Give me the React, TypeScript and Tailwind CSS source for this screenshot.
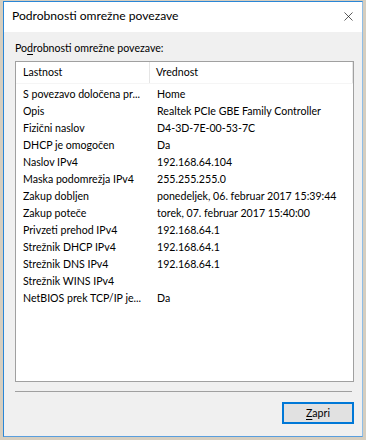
import { X } from "lucide-react"

const rows: Array<[string, string]> = [
  ["S povezavo določena pr...", "Home"],
  ["Opis", "Realtek PCIe GBE Family Controller"],
  ["Fizični naslov", "D4-3D-7E-00-53-7C"],
  ["DHCP je omogočen", "Da"],
  ["Naslov IPv4", "192.168.64.104"],
  ["Maska podomrežja IPv4", "255.255.255.0"],
  ["Zakup dobljen", "ponedeljek, 06. februar 2017 15:39:44"],
  ["Zakup poteče", "torek, 07. februar 2017 15:40:00"],
  ["Privzeti prehod IPv4", "192.168.64.1"],
  ["Strežnik DHCP IPv4", "192.168.64.1"],
  ["Strežnik DNS IPv4", "192.168.64.1"],
  ["Strežnik WINS IPv4", ""],
  ["NetBIOS prek TCP/IP je...", "Da"],
]

export default function App() {
  return (
    <div className="w-[366px] h-[440px] bg-[#d6cebf] pl-[3px] pr-[3px] pt-[1px] pb-[3px] font-['Lato',sans-serif] text-[10.6px] text-black">
      <div className="flex flex-col h-full border border-[#2a86d6] border-r-[#8fbde6] border-b-[#5a9edd]">
        {/* naslovna vrstica */}
        <div className="h-[30px] bg-white flex items-center justify-between pl-[8px] pr-[6px] pb-[1px]">
          <span className="text-[12.1px] leading-none">Podrobnosti omrežne povezave</span>
          <X className="h-[15px] w-[15px] text-[#111]" strokeWidth={1.1} />
        </div>

        <div className="flex-1 bg-[#f0f0f0] px-[11px] pt-[9px] flex flex-col">
          <div className="leading-[15px] mb-[5px]">
            Po<span className="underline underline-offset-2">d</span>robnosti omrežne povezave:
          </div>

          {/* seznam */}
          <div className="h-[321px] w-[339px] bg-white border border-[#a0a0a0] flex flex-col">
            <div className="h-[22px] flex items-center border-b border-[#f5f5f5]">
              <div className="w-[134px] shrink-0 pl-[7px] border-r border-[#e5e5e5] h-full flex items-center">
                Lastnost
              </div>
              <div className="flex-1 pl-[6px] border-r border-[#e5e5e5] h-full flex items-center">
                Vrednost
              </div>
            </div>
            <div className="pt-[2px]">
              {rows.map(([k, v], i) => (
                <div key={i} className="h-[17px] flex items-center">
                  <div className="w-[134px] shrink-0 pl-[7px] whitespace-nowrap overflow-hidden">{k}</div>
                  <div className="flex-1 min-w-0 pl-[7px] whitespace-nowrap overflow-hidden">{v}</div>
                </div>
              ))}
            </div>
          </div>

          <div className="mt-[9px] w-[337px] h-px bg-[#a0a0a0]" />

          <div className="mt-[10px] flex justify-end w-[339px]">
            <button className="w-[72px] h-[22px] border-2 border-[#0078d7] bg-[#e1e1e1] flex items-center justify-center leading-none">
              <span>
                <span className="underline underline-offset-2">Z</span>apri
              </span>
            </button>
          </div>
        </div>
      </div>
    </div>
  )
}
